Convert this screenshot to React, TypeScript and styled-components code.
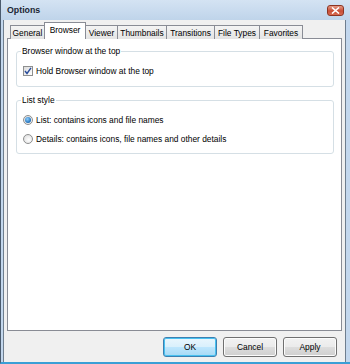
import styled, { createGlobalStyle } from "styled-components";

const GlobalStyle = createGlobalStyle`
  html, body {
    margin: 0;
    padding: 0;
    background: #ffffff;
  }
  body {
    font-family: "Liberation Sans", Arial, sans-serif;
    font-size: 8.4px;
    color: #000000;
  }
  * {
    box-sizing: border-box;
  }
`;

const Window = styled.div`
  width: 350px;
  height: 364px;
  display: flex;
  flex-direction: column;
  background: #c3d7ed;
  border-left: 1px solid #4b5b6d;
  border-bottom: 2px solid #3a9fd6;
  padding: 0 4px 0 2px;
`;

const TitleBar = styled.div`
  height: 20px;
  display: flex;
  align-items: center;
  background: linear-gradient(#d4e3f3, #bfd4ea);
  margin: 0 -4px 0 -2px;
  padding: 0 6px 0 6px;
`;

const Title = styled.span`
  font-weight: bold;
  font-size: 8.8px;
  color: #1b2633;
`;

const CloseButton = styled.div`
  margin-left: auto;
  width: 17px;
  height: 11px;
  border: 1px solid #8c3422;
  border-radius: 3px;
  background: linear-gradient(#e59a86, #c94d35 55%, #d86a50);
  display: flex;
  align-items: center;
  justify-content: center;
`;

const Client = styled.div`
  flex: 1;
  display: flex;
  flex-direction: column;
  background: #f0f0f0;
  border-left: 1px solid #6f7e8e;
  border-right: 1px solid #6f7e8e;
  padding: 0 3px;
`;

const TabStrip = styled.div`
  height: 19px;
  display: flex;
  align-items: flex-end;
  padding-left: 3px;
`;

const Tab = styled.div<{ $active?: boolean; $w: number }>`
  position: relative;
  width: ${(p) => p.$w}px;
  height: ${(p) => (p.$active ? "17px" : "14px")};
  margin-right: -1px;
  border: 1px solid #898c95;
  border-bottom: none;
  background: ${(p) =>
    p.$active ? "#ffffff" : "linear-gradient(#f4f4f4, #e4e4e4)"};
  z-index: ${(p) => (p.$active ? 2 : 1)};
  display: flex;
  justify-content: center;
  align-items: ${(p) => (p.$active ? "flex-start" : "center")};
  padding-top: ${(p) => (p.$active ? "2px" : "0")};
  white-space: nowrap;
`;

const Panel = styled.div`
  height: 293px;
  margin-top: -1px;
  background: #ffffff;
  border: 1px solid #898c95;
  padding: 7px 7px 0 8px;
  display: flex;
  flex-direction: column;
  gap: 8px;
`;

const Group = styled.fieldset<{ $h: number }>`
  margin: 0;
  height: ${(p) => p.$h}px;
  border: 1px solid #d5dfe5;
  border-radius: 3px;
  padding: 0 0 0 6px;
  display: flex;
  flex-direction: column;
`;

const Legend = styled.legend`
  padding: 0 1px;
  margin-left: -2px;
  line-height: 11px;
`;

const Option = styled.label`
  display: flex;
  align-items: center;
  gap: 3px;
  height: 19px;
`;

const OptionList = styled.div`
  display: flex;
  flex-direction: column;
  margin-top: 4px;
`;

const CheckBox = styled.span`
  width: 10px;
  height: 10px;
  border: 1px solid #8e8f8f;
  background: linear-gradient(135deg, #dcdcdc, #ffffff);
  display: flex;
  align-items: center;
  justify-content: center;
`;

const Radio = styled.span<{ $on?: boolean }>`
  width: 10px;
  height: 10px;
  border-radius: 50%;
  border: 1px solid #8e8f8f;
  background: radial-gradient(circle at 60% 60%, #ffffff, #d8d8d8);
  display: flex;
  align-items: center;
  justify-content: center;

  &::after {
    content: "";
    display: ${(p) => (p.$on ? "block" : "none")};
    width: 6px;
    height: 6px;
    border-radius: 50%;
    background: radial-gradient(circle at 40% 35%, #8fd0ff, #1f6fb8 70%, #184f8e);
  }
`;

const ButtonRow = styled.div`
  display: flex;
  justify-content: flex-end;
  gap: 6px;
  padding: 6px 5px 0 0;
`;

const Button = styled.div<{ $default?: boolean }>`
  width: 54px;
  height: 20px;
  border-radius: 3px;
  border: 1px solid ${(p) => (p.$default ? "#3c7fb1" : "#707070")};
  background: ${(p) =>
    p.$default
      ? "linear-gradient(#eaf6fd, #d9f0fc 50%, #bee6fd 51%, #a7d9f5)"
      : "linear-gradient(#f2f2f2, #ebebeb 50%, #dddddd 51%, #cfcfcf)"};
  box-shadow: ${(p) => (p.$default ? "inset 0 0 0 1px #48c1f0" : "inset 0 0 0 1px #fcfcfc")};
  display: flex;
  align-items: center;
  justify-content: center;
`;

const tabs: [string, number][] = [
  ["General", 35],
  ["Browser", 42],
  ["Viewer", 33],
  ["Thumbnails", 50],
  ["Transitions", 49],
  ["File Types", 46],
  ["Favorites", 44],
];

export default function App() {
  return (
    <>
      <GlobalStyle />
      <Window>
        <TitleBar>
          <Title>Options</Title>
          <CloseButton>
            <svg width="9" height="7" viewBox="0 0 9 7">
              <path d="M1 0.5 L8 6.5 M8 0.5 L1 6.5" stroke="#ffffff" strokeWidth="1.6" />
            </svg>
          </CloseButton>
        </TitleBar>
        <Client>
          <TabStrip>
            {tabs.map(([t, w]) => (
              <Tab key={t} $w={w} $active={t === "Browser"}>
                {t}
              </Tab>
            ))}
          </TabStrip>
          <Panel>
            <Group $h={41}>
              <Legend>Browser window at the top</Legend>
              <OptionList>
                <Option>
                  <CheckBox>
                    <svg width="8" height="8" viewBox="0 0 8 8">
                      <path d="M1 4 L3 6.5 L7 0.8" stroke="#2a4d9b" strokeWidth="1.4" fill="none" />
                    </svg>
                  </CheckBox>
                  Hold Browser window at the top
                </Option>
              </OptionList>
            </Group>
            <Group $h={59}>
              <Legend>List style</Legend>
              <OptionList>
                <Option>
                  <Radio $on />
                  List: contains icons and file names
                </Option>
                <Option>
                  <Radio />
                  Details: contains icons, file names and other details
                </Option>
              </OptionList>
            </Group>
          </Panel>
          <ButtonRow>
            <Button $default>OK</Button>
            <Button>Cancel</Button>
            <Button>Apply</Button>
          </ButtonRow>
        </Client>
      </Window>
    </>
  );
}
